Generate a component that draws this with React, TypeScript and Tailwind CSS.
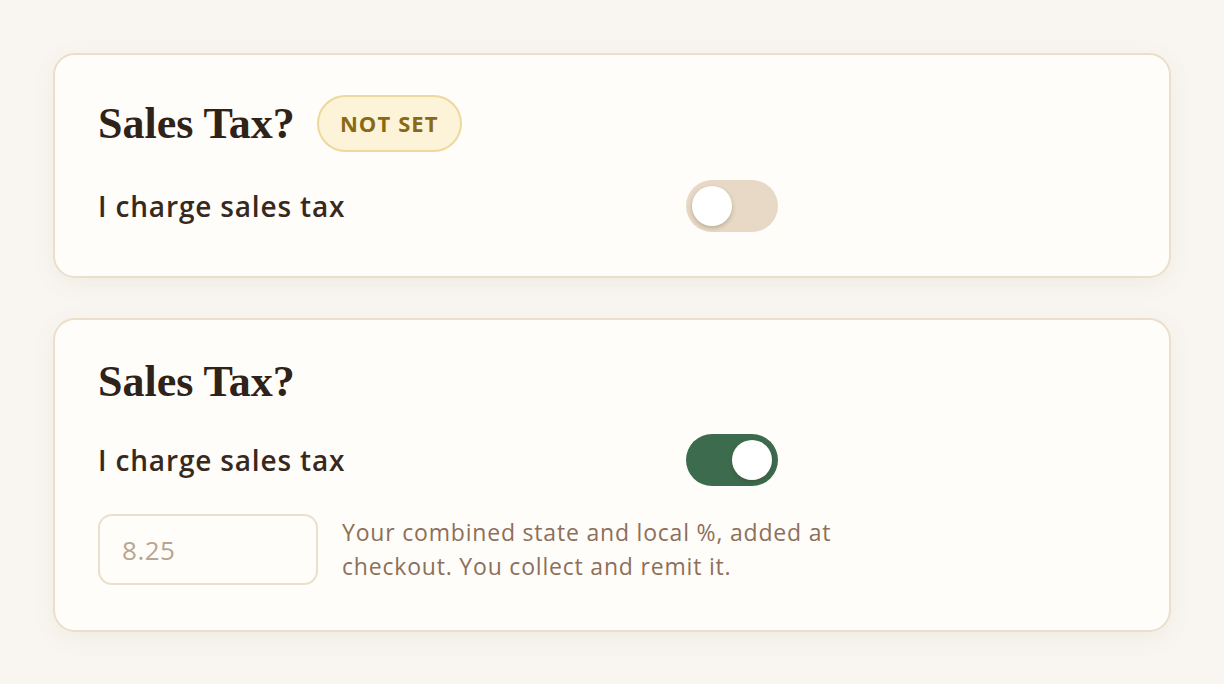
import { useState } from "react";

function Toggle({ on, onChange }: { on: boolean; onChange: (v: boolean) => void }) {
  return (
    <button
      type="button"
      role="switch"
      aria-checked={on}
      onClick={() => onChange(!on)}
      className={
        on
          ? "relative h-[52px] w-[92px] shrink-0 rounded-full bg-[#3d6b4e] transition-colors"
          : "relative h-[52px] w-[92px] shrink-0 rounded-full bg-[#e7d9c5] transition-colors"
      }
    >
      <span
        className={
          on
            ? "absolute left-[46px] top-[6px] h-[40px] w-[40px] rounded-full bg-white shadow-[0_2px_4px_rgba(60,40,20,0.25)] transition-all"
            : "absolute left-[6px] top-[6px] h-[40px] w-[40px] rounded-full bg-white shadow-[0_2px_4px_rgba(60,40,20,0.25)] transition-all"
        }
      />
    </button>
  );
}

function Card({ children }: { children: React.ReactNode }) {
  return (
    <section className="rounded-[22px] border-2 border-[#ebdfcb] bg-[#fffdf9] px-[43px] pt-[40px] pb-[44px] shadow-[0_6px_24px_rgba(120,90,50,0.07)]">
      {children}
    </section>
  );
}

function Heading({ children }: { children: React.ReactNode }) {
  return (
    <h2 className="font-['Liberation_Serif',serif] text-[44px] font-bold leading-[44px] text-[#2e2219]">
      {children}
    </h2>
  );
}

function SalesTaxRow({ on, onChange }: { on: boolean; onChange: (v: boolean) => void }) {
  return (
    <div className="flex w-[680px] items-center justify-between">
      <span className="text-[28px] font-semibold tracking-[0.03em] text-[#38281d]">
        I charge sales tax
      </span>
      <Toggle on={on} onChange={onChange} />
    </div>
  );
}

export default function App() {
  const [first, setFirst] = useState(false);
  const [second, setSecond] = useState(true);

  return (
    <div className="min-h-screen bg-[#f9f6f1] px-[53px] pt-[53px] pb-10 font-['Open_Sans','Noto_Sans',sans-serif]">
      <div className="flex flex-col gap-[40px]">
        <Card>
          <div className="flex items-center gap-[22px]">
            <Heading>Sales Tax?</Heading>
            <span className="flex h-[57px] items-center rounded-full border-2 border-[#eed99c] bg-[#fcf3d9] px-[21px] text-[22px] font-bold uppercase tracking-[0.05em] text-[#8a6914]">
              Not set
            </span>
          </div>
          <div className="mt-[28px]">
            <SalesTaxRow on={first} onChange={setFirst} />
          </div>
        </Card>

        <Card>
          <Heading>Sales Tax?</Heading>
          <div className="mt-[30px]">
            <SalesTaxRow on={second} onChange={setSecond} />
          </div>
          {second && (
            <div className="mt-[28px] mb-[1px] flex items-start gap-[24px]">
              <input
                type="text"
                placeholder="8.25"
                className="h-[71px] w-[220px] shrink-0 rounded-[14px] border-2 border-[#ebdfcb] bg-[#fffdf9] px-[22px] text-[26px] tracking-[0.02em] text-[#38281d] outline-none placeholder:text-[#b8a58f]"
              />
              <p className="mt-[1px] w-[520px] text-[23px] leading-[34px] tracking-[0.035em] text-[#8d6f5a]">
                Your combined state and local %, added at checkout. You collect and remit it.
              </p>
            </div>
          )}
        </Card>
      </div>
    </div>
  );
}
